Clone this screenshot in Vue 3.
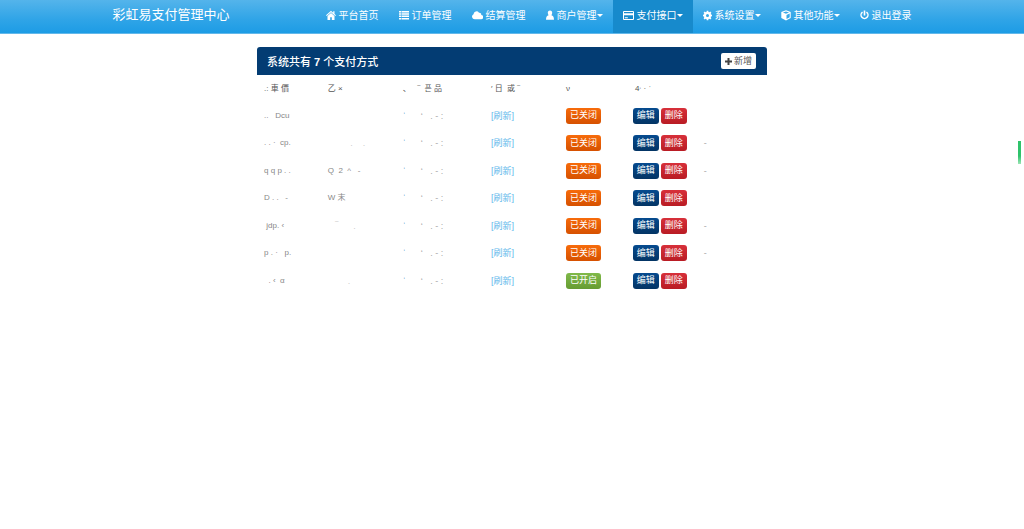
<script setup>
const nav = [
  { icon: 'home', text: '平台首页' },
  { icon: 'list', text: '订单管理' },
  { icon: 'cloud', text: '结算管理' },
  { icon: 'user', text: '商户管理', menu: true },
  { icon: 'card', text: '支付接口', menu: true, active: true },
  { icon: 'gear', text: '系统设置', menu: true },
  { icon: 'cube', text: '其他功能', menu: true },
  { icon: 'power', text: '退出登录' },
]
const icons = {
  home: { w: 10, d: 'M5 .8 0 5.300l.7.7L5 2.200 9.300 6l.7-.7-1.500-1.400V1.200H7.200v1.500zM5 3.100 1.500 6.100V10h2.700V7.200h1.600V10h2.700V6.100z' },
  list: { w: 10, d: 'M0 1h2v1.500H0zM2.500 1H10v1.500H2.500zM0 3.300h2v1.500H0zM2.500 3.300H10v1.500H2.500zM0 5.600h2v1.500H0zM2.500 5.600H10v1.500H2.500zM0 7.900h2v1.500H0zM2.500 7.900H10v1.500H2.500z' },
  cloud: { w: 11, d: 'M2.700 9.300A2.700 2.700 0 0 1 1.500 4.200 3 3 0 0 1 7 2.700 1.800 1.800 0 0 1 9.200 4.900 2.200 2.200 0 0 1 8.800 9.300z' },
  user: { w: 8, d: 'M4 .5C2.500.5 1.700 1.600 1.800 3c.1 1 .4 1.800.8 2.300C.9 5.700.1 6.900 0 9.700h8C7.900 6.900 7.100 5.700 5.400 5.300c.4-.5.7-1.300.8-2.300C6.300 1.600 5.500.5 4 .5z' },
  card: { w: 11, d: 'M1 1h9q1 0 1 1v7q0 1-1 1H1q-1 0-1-1V2q0-1 1-1zM1 2v1.200h9V2zM1 5.200V9h9V5.200zM1.800 7.200h3v1h-3z' },
  gear: { w: 9, d: 'M3.700.8h1.600l.2 1.200.8.3 1-.7 1.100 1.100-.7 1 .3.800 1 .2v1.600l-1 .2-.3.800.7 1-1.100 1.100-1-.7-.8.300-.2 1.200H3.700L3.500 9l-.8-.3-1 .7L.6 8.300l.7-1L1 6.500 0 6.300V4.700l1-.2.300-.8-.7-1 1.100-1.100 1 .7.800-.3zM4.500 4a1.500 1.500 0 1 0 0 3 1.500 1.500 0 0 0 0-3z' },
  cube: { w: 10, d: 'M5 .3l4.700 1.800v5.900L5 10.500.3 8V2.100zM5 1.400 1.900 2.600 5 3.800l3.100-1.200zM5.500 4.900v4.100l3.200-1.700V3.600z' },
  power: { w: 9, d: 'M3.700.5h1.600v5H3.700zM2.100 1.500l.9 1.200A2.700 2.700 0 1 0 6 2.700l.9-1.200A4.200 4.200 0 1 1 2.100 1.500z' },
}
const heads = ['.: 車 價', '乙 ×', '、   ‾  픈 品', '′ 日  或 ‾', 'ν', ' 4ᐧ · ˈ']
const device = '      ‘   . - :'
const rows = [
  { code: '..   Dcu', name: '' },
  { code: '. . ·  cp.', name: '         .    .', tail: '-' },
  { code: 'q q p . .', name: 'Q  2  ^   -', dark: true, tail: '-' },
  { code: 'D . .   -', name: 'W 末', dark: true },
  { code: ' jdp. ‹', name: '   ‾      .', tail: '-' },
  { code: 'p . ·   p.', name: '', tail: '-' },
  { code: '  . ‹  α', name: '        .', on: true },
]
</script>

<template>
  <div class="page">
    <header class="navbar">
      <div class="container">
        <a class="brand" href="#">彩虹易支付管理中心</a>
        <nav>
          <a v-for="n in nav" :key="n.text" href="#" :class="{ active: n.active }">
            <svg :width="icons[n.icon].w" height="11" :viewBox="`0 0 ${icons[n.icon].w} 11`" aria-hidden="true">
              <path :d="icons[n.icon].d" fill="currentColor" fill-rule="evenodd" />
            </svg>
            <span>{{ n.text }}</span>
            <i v-if="n.menu" class="caret"></i>
          </a>
        </nav>
      </div>
    </header>
    <main class="panel">
      <div class="heading">
        <h1>系统共有 <b>7</b> 个支付方式</h1>
        <button class="add" type="button">
          <svg width="7" height="7" viewBox="0 0 7 7" aria-hidden="true"><path d="M2.500 0h2v2.500H7v2H4.500V7h-2V4.500H0v-2h2.500z" fill="#444" /></svg>
          新增
        </button>
      </div>
      <table>
        <colgroup>
          <col class="c1" /><col class="c2" /><col class="c3" /><col class="c4" /><col class="c5" /><col />
        </colgroup>
        <thead>
          <tr><th v-for="h in heads" :key="h" scope="col">{{ h }}</th></tr>
        </thead>
        <tbody>
          <tr v-for="(r, i) in rows" :key="i">
            <td class="code">{{ r.code }}</td>
            <td :class="r.dark ? 'code' : 'faint'">{{ r.name }}</td>
            <td class="device"><span>ˈ</span>{{ device }}</td>
            <td><a href="#" class="refresh">[刷新]</a></td>
            <td><button type="button" :class="r.on ? 'green' : 'orange'">{{ r.on ? '已开启' : '已关闭' }}</button></td>
            <td>
              <div class="actions">
                <button type="button" class="blue">编辑</button>
                <button type="button" class="red">删除</button>
                <span v-if="r.tail" class="tail">{{ r.tail }}</span>
              </div>
            </td>
          </tr>
        </tbody>
      </table>
    </main>
    <div class="marker"></div>
  </div>
</template>

<style>
body {
  margin: 0;
  background: #fff;
}
</style>

<style scoped>
.page {
  font-family: "Liberation Sans", "Noto Sans CJK SC", sans-serif;
  font-size: 9px;
  color: #444;
}
a {
  text-decoration: none;
}
.navbar {
  background: linear-gradient(#54b4eb, #2fa4e7 60%, #1d9ce5);
  border-bottom: 1px solid #63b8ea;
}
.container {
  width: 80%;
  height: 33px;
  margin: 0 auto;
  display: flex;
  justify-content: space-between;
}
.brand {
  padding-left: 10px;
  font-size: 13px;
  line-height: 30px;
  color: #fff;
  white-space: nowrap;
}
nav {
  display: flex;
}
nav a {
  display: flex;
  align-items: center;
  gap: 3px;
  padding: 0 10px 2px;
  font-size: 10px;
  line-height: 14px;
  color: #fff;
  white-space: nowrap;
}
nav .active {
  background: #178acc;
}
nav svg {
  flex: none;
}
.caret {
  border: 3px solid transparent;
  border-top-color: #fff;
  border-bottom: 0;
  margin-left: -3px;
}
.panel {
  width: 49.800%;
  margin: 13px auto 0;
}
.heading {
  display: flex;
  align-items: center;
  justify-content: space-between;
  height: 28px;
  padding: 0 11px 0 10px;
  background: #033c73;
  border-radius: 3px 3px 0 0;
  color: #fff;
}
h1 {
  margin: 0;
  font-size: 11px;
  font-weight: 500;
}
button {
  height: 16px;
  padding: 0 4px;
  border: 0;
  border-radius: 3px;
  font: 9px/15px "Liberation Sans", "Noto Sans CJK SC", sans-serif;
  color: #fff;
  white-space: nowrap;
}
.add {
  display: flex;
  align-items: center;
  gap: 2px;
  border-radius: 2px;
  background: #fff;
  color: #555;
}
table {
  width: 100%;
  table-layout: fixed;
  border-collapse: collapse;
}
.c1 { width: 12.500%; }
.c2 { width: 14.700%; }
.c3 { width: 17.300%; }
.c4 { width: 14.700%; }
.c5 { width: 13.100%; }
th,
td {
  height: 27px;
  padding: 0 0 0 7px;
  text-align: left;
  vertical-align: middle;
  line-height: 12px;
  white-space: pre;
}
th {
  font-size: 8px;
  font-weight: 400;
  color: #555;
}
tbody tr:nth-child(even) td {
  height: 28px;
}
.code {
  font-size: 8px;
  color: #888;
}
.faint {
  color: #ccc;
}
.device {
  color: #aaa;
}
.device span {
  color: #4a9ccb;
}
.refresh {
  color: #62b9eb;
}
td button {
  display: block;
}
.actions {
  display: flex;
  align-items: center;
  gap: 2px;
}
.tail {
  padding-left: 15px;
  color: #aaa;
}
.orange { background: linear-gradient(#f76b0b, #d65100); }
.green { background: linear-gradient(#80b94a, #669c32); }
.blue { background: linear-gradient(#064b8f, #033464); }
.red { background: linear-gradient(#d7303a, #b91c24); }
.marker {
  position: fixed;
  top: 141px;
  right: 3px;
  width: 3px;
  height: 23px;
  background: linear-gradient(#2fc36b 65%, #9be5b5);
}
</style>
